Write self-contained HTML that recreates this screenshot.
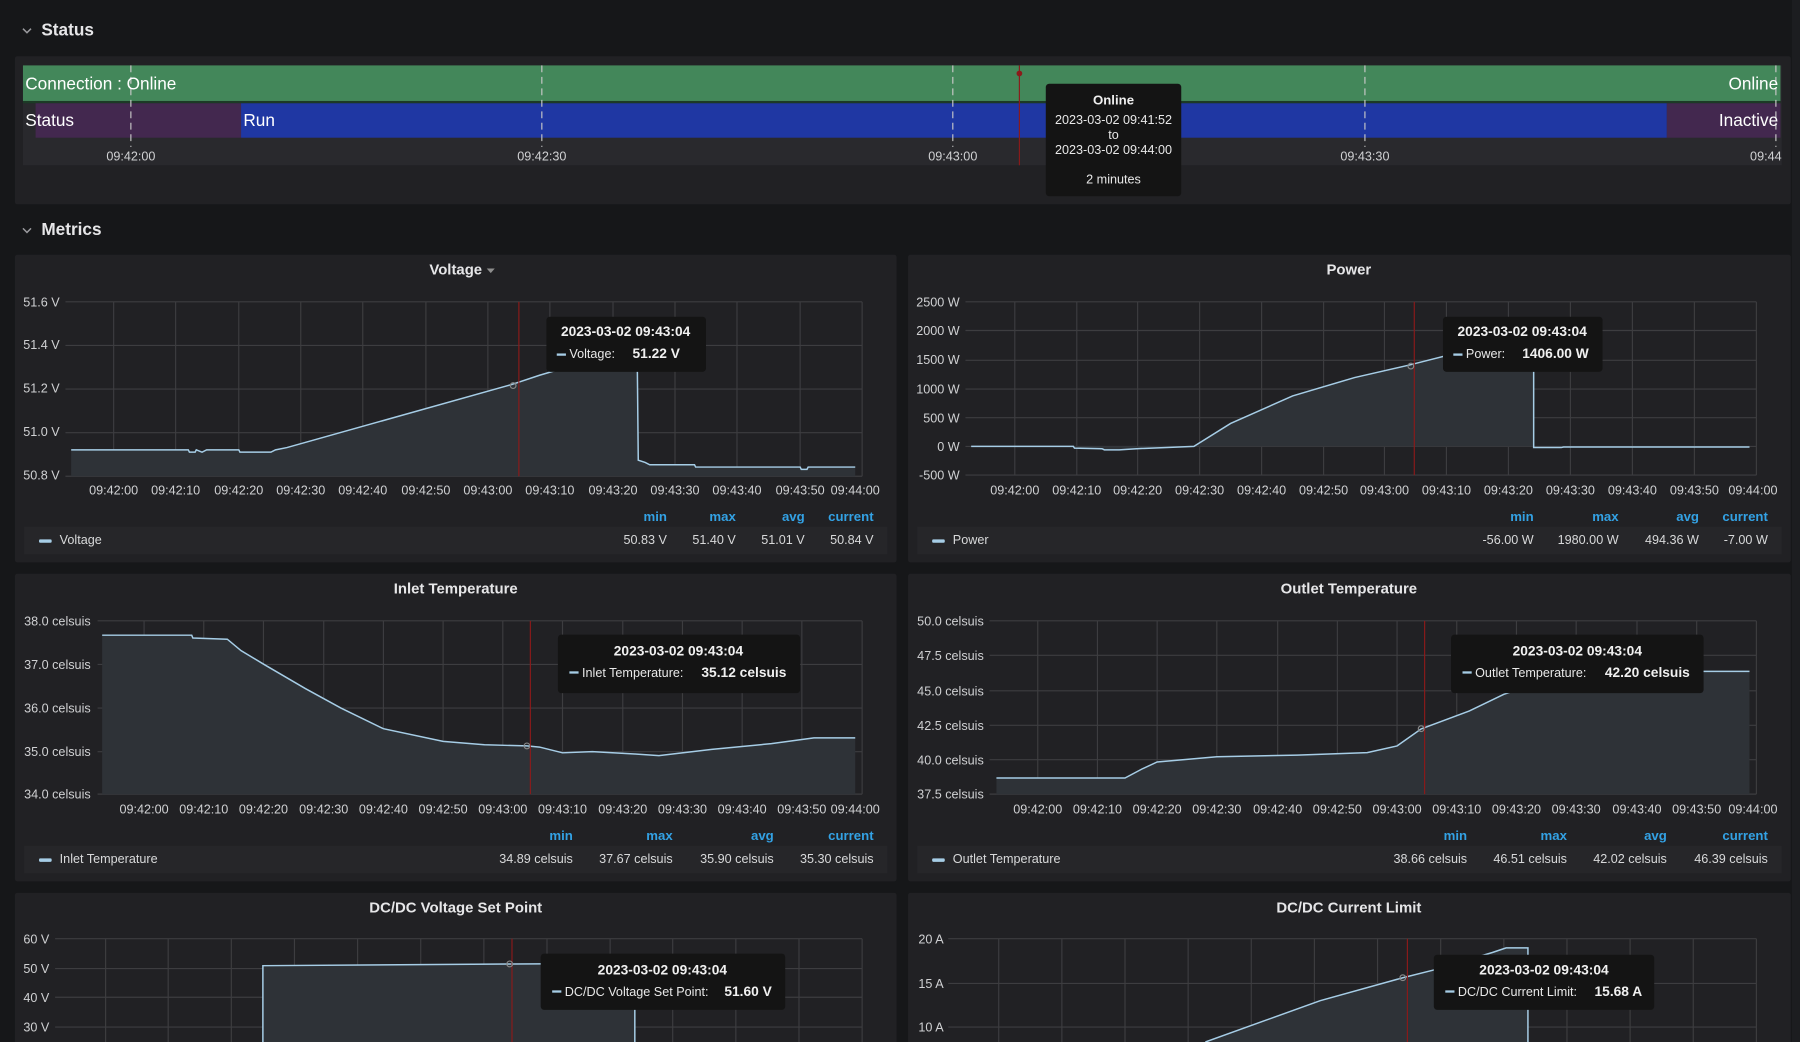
<!DOCTYPE html>
<html><head><meta charset="utf-8"><style>
html,body{margin:0;padding:0;background:#161719;width:1800px;height:1042px;overflow:hidden}
svg{display:block}
text{font-family:"Liberation Sans",Arial,sans-serif}
.ax{font-size:11px;fill:#d0d1d3}
.ttl{font-size:13px;fill:#e6e6e8;font-weight:bold}
.lh{font-size:11.5px;fill:#33a2e5;font-weight:bold}
.lv{font-size:11px;fill:#d8d9da}
.tt{font-size:12px;fill:#e8e8e8}
.ttb{font-size:12px;fill:#f0f0f0;font-weight:bold}
.grid{stroke:#3d3d40;stroke-width:1;fill:none}
.ln{stroke:#a6cde6;stroke-width:1.3;fill:none}
.fl{fill:#2e3237}
.red{stroke:#8c1a1a;stroke-width:1}
</style></head><body>
<svg width="1800" height="1042" viewBox="0 0 1568 908" preserveAspectRatio="none" xmlns="http://www.w3.org/2000/svg">
<rect width="1568" height="908" fill="#161719"/>
<rect x="1561" y="0" width="7" height="908" fill="#1c1d20"/>

<!-- Status header -->
<path d="M20 25 l3.5 3.5 l3.5 -3.5" stroke="#9a9a9e" stroke-width="1.3" fill="none"/>
<text x="36" y="31" style="font-size:15px;fill:#e6e6e8;font-weight:bold">Status</text>

<rect x="13" y="49" width="1547" height="129" rx="2" fill="#212124"/>
<rect x="20" y="57" width="1532" height="87" fill="#29292d"/>
<rect x="20" y="57" width="1531" height="31" fill="#43875a"/>
<rect x="20" y="88" width="1531" height="2" fill="#1c3a26"/>
<rect x="31" y="90" width="179" height="30" fill="#43284f"/>
<rect x="210" y="90" width="1242" height="30" fill="#1f37a3"/>
<rect x="1452" y="90" width="99" height="30" fill="#43284f"/>
<g stroke="#c8c8c8" stroke-width="1" stroke-dasharray="6,4">
<line x1="114" y1="57" x2="114" y2="128"/><line x1="472" y1="57" x2="472" y2="128"/><line x1="830" y1="57" x2="830" y2="128"/><line x1="1189" y1="57" x2="1189" y2="128"/><line x1="1547" y1="57" x2="1547" y2="128"/>
</g>
<text x="22" y="78" style="font-size:15px;fill:#fff">Connection : Online</text>
<text x="22" y="110" style="font-size:15px;fill:#fff">Status</text>
<text x="212" y="110" style="font-size:15px;fill:#fff">Run</text>
<text x="1549" y="78" text-anchor="end" style="font-size:15px;fill:#fff">Online</text>
<text x="1549" y="110" text-anchor="end" style="font-size:15px;fill:#fff">Inactive</text>
<g class="ax" text-anchor="middle"><text x="114" y="140">09:42:00</text><text x="472" y="140">09:42:30</text><text x="830" y="140">09:43:00</text><text x="1189" y="140">09:43:30</text><text x="1552" y="140" text-anchor="end">09:44</text></g>
<line x1="888" y1="57" x2="888" y2="144" class="red"/><circle cx="888" cy="64" r="2.5" fill="#8c1a1a"/>
<rect x="911" y="73" width="118" height="98" rx="3" fill="#141414"/>
<g text-anchor="middle"><text x="970" y="91" class="ttb" style="font-size:11.5px">Online</text>
<text x="970" y="108" class="tt" style="font-size:11px">2023-03-02 09:41:52</text>
<text x="970" y="121" class="tt" style="font-size:11px">to</text>
<text x="970" y="134" class="tt" style="font-size:11px">2023-03-02 09:44:00</text>
<text x="970" y="160" class="tt" style="font-size:11px">2 minutes</text></g>

<!-- Metrics header -->
<path d="M20 199 l3.5 3.5 l3.5 -3.5" stroke="#9a9a9e" stroke-width="1.3" fill="none"/>
<text x="36" y="205" style="font-size:15px;fill:#e6e6e8;font-weight:bold">Metrics</text>

<!-- panels -->
<rect x="13" y="222" width="768" height="268" rx="2" fill="#212124"/>
<rect x="791" y="222" width="769" height="268" rx="2" fill="#212124"/>
<rect x="13" y="500" width="768" height="268" rx="2" fill="#212124"/>
<rect x="791" y="500" width="769" height="268" rx="2" fill="#212124"/>
<rect x="13" y="778" width="768" height="140" rx="2" fill="#212124"/>
<rect x="791" y="778" width="769" height="140" rx="2" fill="#212124"/>

<!-- ===== Voltage ===== -->
<text x="397" y="239" text-anchor="middle" class="ttl">Voltage</text>
<path d="M424 234 l3.5 4 l3.5 -4z" fill="#8e8e8e"/>
<path class="grid" d="M99 263V415M153 263V415M208 263V415M262 263V415M316 263V415M371 263V415M425 263V415M479 263V415M534 263V415M588 263V415M642 263V415M697 263V415M751 263V415M57 263H751M57 301H751M57 339H751M57 377H751M57 415H751"/>
<polygon class="fl" points="62,415 62,392 164,392 165,394 170,394 171,392 176,394 180,392 208,392 209,394 236,394 240,392 250,390 446,335 470,327 555,302 556,401 562,403 566,405 605,405 606,407 697,407 698,409 703,409 704,407 745,407 745,415"/>
<polyline class="ln" points="62,392 164,392 165,394 170,394 171,392 176,394 180,392 208,392 209,394 236,394 240,392 250,390 446,335 470,327 555,302 556,401 562,403 566,405 605,405 606,407 697,407 698,409 703,409 704,407 745,407"/>
<line x1="452" y1="263" x2="452" y2="415" class="red"/><circle cx="447" cy="336" r="2.5" fill="none" stroke="#888"/>
<g class="ax" text-anchor="end"><text x="52" y="267">51.6 V</text><text x="52" y="304">51.4 V</text><text x="52" y="342">51.2 V</text><text x="52" y="380">51.0 V</text><text x="52" y="418">50.8 V</text></g>
<g class="ax" text-anchor="middle"><text x="99" y="431">09:42:00</text><text x="153" y="431">09:42:10</text><text x="208" y="431">09:42:20</text><text x="262" y="431">09:42:30</text><text x="316" y="431">09:42:40</text><text x="371" y="431">09:42:50</text><text x="425" y="431">09:43:00</text><text x="479" y="431">09:43:10</text><text x="534" y="431">09:43:20</text><text x="588" y="431">09:43:30</text><text x="642" y="431">09:43:40</text><text x="697" y="431">09:43:50</text><text x="745" y="431">09:44:00</text></g>
<g class="lh" text-anchor="end"><text x="581" y="454">min</text><text x="641" y="454">max</text><text x="701" y="454">avg</text><text x="761" y="454">current</text></g>
<rect x="21" y="459" width="752" height="24" fill="#262629"/>
<rect x="34" y="470" width="11" height="3" rx="1" fill="#a6cde6"/>
<text x="52" y="474" class="lv">Voltage</text>
<g class="lv" text-anchor="end"><text x="581" y="474">50.83 V</text><text x="641" y="474">51.40 V</text><text x="701" y="474">51.01 V</text><text x="761" y="474">50.84 V</text></g>
<rect x="476" y="276" width="139" height="48" rx="3" fill="#141414"/>
<text x="545" y="293" text-anchor="middle" class="ttb">2023-03-02 09:43:04</text>
<rect x="485" y="308" width="8" height="2" fill="#a6cde6"/><text x="496" y="312" class="tt" style="font-size:11px">Voltage:</text><text x="551" y="312" class="ttb">51.22 V</text>

<!-- ===== Power ===== -->
<text x="1175" y="239" text-anchor="middle" class="ttl">Power</text>
<path class="grid" d="M884 263V414M938 263V414M991 263V414M1045 263V414M1099 263V414M1153 263V414M1206 263V414M1260 263V414M1314 263V414M1368 263V414M1422 263V414M1476 263V414M1530 263V414M841 263H1530M841 288H1530M841 314H1530M841 339H1530M841 364H1530M841 389H1530M841 414H1530"/>
<polygon class="fl" points="846,389 935,389 936,390.5 960,391 962,392 975,392 990,391 1040,389 1072,369 1126,345 1180,329 1228,318 1287,303 1336,290 1336,389"/>
<polyline class="ln" points="846,389 935,389 936,390.5 960,391 962,392 975,392 990,391 1040,389 1072,369 1126,345 1180,329 1228,318 1287,303 1336,290 1336,390 1360,390 1362,389.5 1524,389.5"/>
<line x1="1232" y1="263" x2="1232" y2="414" class="red"/><circle cx="1229" cy="319" r="2.5" fill="none" stroke="#888"/>
<g class="ax" text-anchor="end"><text x="836" y="267">2500 W</text><text x="836" y="292">2000 W</text><text x="836" y="317">1500 W</text><text x="836" y="343">1000 W</text><text x="836" y="368">500 W</text><text x="836" y="393">0 W</text><text x="836" y="418">-500 W</text></g>
<g class="ax" text-anchor="middle"><text x="884" y="431">09:42:00</text><text x="938" y="431">09:42:10</text><text x="991" y="431">09:42:20</text><text x="1045" y="431">09:42:30</text><text x="1099" y="431">09:42:40</text><text x="1153" y="431">09:42:50</text><text x="1206" y="431">09:43:00</text><text x="1260" y="431">09:43:10</text><text x="1314" y="431">09:43:20</text><text x="1368" y="431">09:43:30</text><text x="1422" y="431">09:43:40</text><text x="1476" y="431">09:43:50</text><text x="1527" y="431">09:44:00</text></g>
<g class="lh" text-anchor="end"><text x="1336" y="454">min</text><text x="1410" y="454">max</text><text x="1480" y="454">avg</text><text x="1540" y="454">current</text></g>
<rect x="799" y="459" width="753" height="24" fill="#262629"/>
<rect x="812" y="470" width="11" height="3" rx="1" fill="#a6cde6"/>
<text x="830" y="474" class="lv">Power</text>
<g class="lv" text-anchor="end"><text x="1336" y="474">-56.00 W</text><text x="1410" y="474">1980.00 W</text><text x="1480" y="474">494.36 W</text><text x="1540" y="474">-7.00 W</text></g>
<rect x="1257" y="276" width="139" height="48" rx="3" fill="#141414"/>
<text x="1326" y="293" text-anchor="middle" class="ttb">2023-03-02 09:43:04</text>
<rect x="1266" y="308" width="8" height="2" fill="#a6cde6"/><text x="1277" y="312" class="tt" style="font-size:11px">Power:</text><text x="1326" y="312" class="ttb">1406.00 W</text>

<!-- ===== Inlet ===== -->
<text x="397" y="517" text-anchor="middle" class="ttl">Inlet Temperature</text>
<path class="grid" d="M125.5 541V692M177.5 541V692M229.5 541V692M282 541V692M334 541V692M386 541V692M438 541V692M490 541V692M542.5 541V692M594.5 541V692M646.5 541V692M698.5 541V692M751 541V692M85 541H751M85 579H751M85 617H751M85 655H751M85 692H751"/>
<polygon class="fl" points="89,692 89,553.5 167,553.5 168,556 198,557 210,567 230,579 266,600 297,617 334,635 386,646 422,649 459,650 470,651 490,656 516,655 553,657 574,658.4 620,653 672,648 709,643 745,643 745,692"/>
<polyline class="ln" points="89,553.5 167,553.5 168,556 198,557 210,567 230,579 266,600 297,617 334,635 386,646 422,649 459,650 470,651 490,656 516,655 553,657 574,658.4 620,653 672,648 709,643 745,643"/>
<line x1="462" y1="541" x2="462" y2="692" class="red"/><circle cx="459" cy="650" r="2.5" fill="none" stroke="#888"/>
<g class="ax" text-anchor="end"><text x="79" y="545">38.0 celsuis</text><text x="79" y="583">37.0 celsuis</text><text x="79" y="621">36.0 celsuis</text><text x="79" y="659">35.0 celsuis</text><text x="79" y="696">34.0 celsuis</text></g>
<g class="ax" text-anchor="middle"><text x="125.5" y="709">09:42:00</text><text x="177.5" y="709">09:42:10</text><text x="229.5" y="709">09:42:20</text><text x="282" y="709">09:42:30</text><text x="334" y="709">09:42:40</text><text x="386" y="709">09:42:50</text><text x="438" y="709">09:43:00</text><text x="490" y="709">09:43:10</text><text x="542.5" y="709">09:43:20</text><text x="594.5" y="709">09:43:30</text><text x="646.5" y="709">09:43:40</text><text x="698.5" y="709">09:43:50</text><text x="745" y="709">09:44:00</text></g>
<g class="lh" text-anchor="end"><text x="499" y="732">min</text><text x="586" y="732">max</text><text x="674" y="732">avg</text><text x="761" y="732">current</text></g>
<rect x="21" y="737" width="752" height="24" fill="#262629"/>
<rect x="34" y="748" width="11" height="3" rx="1" fill="#a6cde6"/>
<text x="52" y="752" class="lv">Inlet Temperature</text>
<g class="lv" text-anchor="end"><text x="499" y="752">34.89 celsuis</text><text x="586" y="752">37.67 celsuis</text><text x="674" y="752">35.90 celsuis</text><text x="761" y="752">35.30 celsuis</text></g>
<rect x="486" y="553" width="211" height="51" rx="3" fill="#141414"/>
<text x="591" y="571" text-anchor="middle" class="ttb">2023-03-02 09:43:04</text>
<rect x="496" y="585" width="8" height="2" fill="#a6cde6"/><text x="507" y="590" class="tt" style="font-size:11px">Inlet Temperature:</text><text x="611" y="590" class="ttb">35.12 celsuis</text>

<!-- ===== Outlet ===== -->
<text x="1175" y="517" text-anchor="middle" class="ttl">Outlet Temperature</text>
<path class="grid" d="M904 541V692M956 541V692M1008 541V692M1060 541V692M1113 541V692M1165 541V692M1217 541V692M1269 541V692M1321 541V692M1373 541V692M1426 541V692M1478 541V692M1530 541V692M862 541H1530M862 571H1530M862 602H1530M862 632H1530M862 662H1530M862 692H1530"/>
<polygon class="fl" points="868,692 868,678 980,678 995,670 1008,664 1060,659.4 1130,658 1191,655.8 1217,650 1238,635.2 1280,619.5 1310,605 1322,601 1343,585 1524,585 1524,692"/>
<polyline class="ln" points="868,678 980,678 995,670 1008,664 1060,659.4 1130,658 1191,655.8 1217,650 1238,635.2 1280,619.5 1310,605 1322,601 1343,585 1524,585"/>
<line x1="1241" y1="541" x2="1241" y2="692" class="red"/><circle cx="1238" cy="635" r="2.5" fill="none" stroke="#888"/>
<g class="ax" text-anchor="end"><text x="857" y="545">50.0 celsuis</text><text x="857" y="575">47.5 celsuis</text><text x="857" y="606">45.0 celsuis</text><text x="857" y="636">42.5 celsuis</text><text x="857" y="666">40.0 celsuis</text><text x="857" y="696">37.5 celsuis</text></g>
<g class="ax" text-anchor="middle"><text x="904" y="709">09:42:00</text><text x="956" y="709">09:42:10</text><text x="1008" y="709">09:42:20</text><text x="1060" y="709">09:42:30</text><text x="1113" y="709">09:42:40</text><text x="1165" y="709">09:42:50</text><text x="1217" y="709">09:43:00</text><text x="1269" y="709">09:43:10</text><text x="1321" y="709">09:43:20</text><text x="1373" y="709">09:43:30</text><text x="1426" y="709">09:43:40</text><text x="1478" y="709">09:43:50</text><text x="1527" y="709">09:44:00</text></g>
<g class="lh" text-anchor="end"><text x="1278" y="732">min</text><text x="1365" y="732">max</text><text x="1452" y="732">avg</text><text x="1540" y="732">current</text></g>
<rect x="799" y="737" width="753" height="24" fill="#262629"/>
<rect x="812" y="748" width="11" height="3" rx="1" fill="#a6cde6"/>
<text x="830" y="752" class="lv">Outlet Temperature</text>
<g class="lv" text-anchor="end"><text x="1278" y="752">38.66 celsuis</text><text x="1365" y="752">46.51 celsuis</text><text x="1452" y="752">42.02 celsuis</text><text x="1540" y="752">46.39 celsuis</text></g>
<rect x="1264" y="553" width="220" height="51" rx="3" fill="#141414"/>
<text x="1374" y="571" text-anchor="middle" class="ttb">2023-03-02 09:43:04</text>
<rect x="1274" y="585" width="8" height="2" fill="#a6cde6"/><text x="1285" y="590" class="tt" style="font-size:11px">Outlet Temperature:</text><text x="1398" y="590" class="ttb">42.20 celsuis</text>

<!-- ===== DC/DC Voltage Set Point ===== -->
<text x="397" y="795" text-anchor="middle" class="ttl">DC/DC Voltage Set Point</text>
<path class="grid" d="M92 818V908M146.5 818V908M201.5 818V908M256.5 818V908M311.5 818V908M366.5 818V908M421.5 818V908M476.5 818V908M531.5 818V908M586 818V908M641 818V908M696 818V908M751 818V908M48 818H751M48 844H751M48 869H751M48 895H751"/>
<polygon class="fl" points="229,908 229,841.5 446,840 553,839.5 553,908"/>
<polyline class="ln" points="229,908 229,841.5 446,840 553,839.5 553,908"/>
<line x1="446" y1="818" x2="446" y2="908" class="red"/><circle cx="444" cy="840" r="2.5" fill="none" stroke="#888"/>
<g class="ax" text-anchor="end"><text x="43" y="822">60 V</text><text x="43" y="848">50 V</text><text x="43" y="873">40 V</text><text x="43" y="899">30 V</text></g>
<rect x="471" y="831" width="213" height="49" rx="3" fill="#141414"/>
<text x="577" y="849" text-anchor="middle" class="ttb">2023-03-02 09:43:04</text>
<rect x="481" y="863" width="8" height="2" fill="#a6cde6"/><text x="492" y="868" class="tt" style="font-size:11px">DC/DC Voltage Set Point:</text><text x="631" y="868" class="ttb">51.60 V</text>

<!-- ===== DC/DC Current Limit ===== -->
<text x="1175" y="795" text-anchor="middle" class="ttl">DC/DC Current Limit</text>
<path class="grid" d="M870 818V908M925 818V908M980 818V908M1035 818V908M1090 818V908M1145 818V908M1200 818V908M1255 818V908M1310 818V908M1365 818V908M1420 818V908M1475 818V908M1530 818V908M826 818H1530M826 857H1530M826 895H1530"/>
<polygon class="fl" points="1050,908 1100,890 1150,872 1222,852 1250,845 1300,830 1312,826 1331,826 1331,908"/>
<polyline class="ln" points="1050,908 1100,890 1150,872 1222,852 1250,845 1300,830 1312,826 1331,826 1331,908"/>
<line x1="1226" y1="818" x2="1226" y2="908" class="red"/><circle cx="1222" cy="852" r="2.5" fill="none" stroke="#888"/>
<g class="ax" text-anchor="end"><text x="822" y="822">20 A</text><text x="822" y="861">15 A</text><text x="822" y="899">10 A</text></g>
<rect x="1249" y="832" width="192" height="48" rx="3" fill="#141414"/>
<text x="1345" y="849" text-anchor="middle" class="ttb">2023-03-02 09:43:04</text>
<rect x="1259" y="863" width="8" height="2" fill="#a6cde6"/><text x="1270" y="868" class="tt" style="font-size:11px">DC/DC Current Limit:</text><text x="1389" y="868" class="ttb">15.68 A</text>
</svg>
</body></html>
